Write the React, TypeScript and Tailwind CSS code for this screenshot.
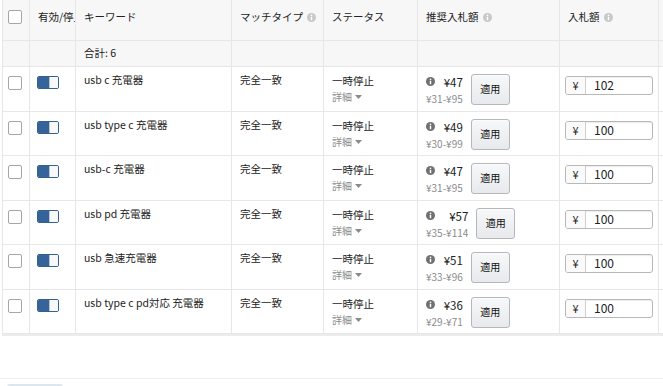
import { ReactNode } from "react"

type Row = {
  keyword: string
  bid: string
  price: string
  range: string
}

const rows: Row[] = [
  { keyword: "usb c 充電器", bid: "102", price: "¥47", range: "¥31-¥95" },
  { keyword: "usb type c 充電器", bid: "100", price: "¥49", range: "¥30-¥99" },
  { keyword: "usb-c 充電器", bid: "100", price: "¥47", range: "¥31-¥95" },
  { keyword: "usb pd 充電器", bid: "100", price: "¥57", range: "¥35-¥114" },
  { keyword: "usb 急速充電器", bid: "100", price: "¥51", range: "¥33-¥96" },
  { keyword: "usb type c pd対応 充電器", bid: "100", price: "¥36", range: "¥29-¥71" },
]

const rowHeights = ["h-[45px]", "h-[44px]", "h-[45px]", "h-[44px]", "h-[45px]", "h-[44px]"]

function InfoIcon({ dark }: { dark?: boolean }) {
  return (
    <svg width="9" height="9" viewBox="0 0 10 10" className="inline-block shrink-0">
      <circle cx="5" cy="5" r="5" fill={dark ? "#707070" : "#c8c8c8"} />
      <rect x="4.2" y="4.2" width="1.6" height="3.8" fill="#fff" />
      <circle cx="5" cy="2.7" r="0.9" fill="#fff" />
    </svg>
  )
}

function Checkbox() {
  return <div className="w-[14px] h-[14px] rounded-[2px] border border-[#a6a6a6] bg-white" />
}

function Toggle() {
  return (
    <div className="flex w-[22px] h-[13px] rounded-[2px] border border-[#35618f] overflow-hidden">
      <div className="w-[11px] h-full bg-[#36639a]" />
      <div className="flex-1 h-full bg-[#f6f8fa] border-l border-[#b9c4d0]" />
    </div>
  )
}

function Th({ children, className = "px-[8px] pt-[9px]" }: { children?: ReactNode; className?: string }) {
  return (
    <th className={"border-r border-[#e7e7e7] bg-[#f7f7f7] align-top text-left font-normal whitespace-nowrap overflow-hidden " + className}>
      {children}
    </th>
  )
}

function Td({ children, className = "px-[8px] pt-[6px]" }: { children?: ReactNode; className?: string }) {
  return <td className={"border-r border-[#e7e7e7] align-top " + className}>{children}</td>
}

export default function App() {
  return (
    <div
      className="w-[663px] h-[386px] overflow-hidden bg-white text-[10.5px] leading-[16px] text-[#222]"
      style={{ fontFamily: '"Noto Sans CJK JP", "Noto Sans", sans-serif' }}
    >
      <div className="pl-[2px]">
        <table className="table-fixed border-collapse w-[757px] border-l border-[#e7e7e7] shadow-[0_2px_0_#ececec]">
          <colgroup>
            <col className="w-[27px]" />
            <col className="w-[46px]" />
            <col className="w-[156px]" />
            <col className="w-[92px]" />
            <col className="w-[94px]" />
            <col className="w-[142px]" />
            <col className="w-[99px]" />
            <col className="w-[101px]" />
          </colgroup>
          <thead>
            <tr className="h-[40px] border-b border-[#e7e7e7]">
              <Th className="pl-[5px] pt-[10px]">
                <Checkbox />
              </Th>
              <Th className="pl-[8px] pt-[9px]">有効/停止</Th>
              <Th>キーワード</Th>
              <Th>
                <span className="inline-flex items-center gap-[4px]">
                  マッチタイプ <InfoIcon />
                </span>
              </Th>
              <Th>ステータス</Th>
              <Th>
                <span className="inline-flex items-center gap-[4px]">
                  推奨入札額 <InfoIcon />
                </span>
              </Th>
              <Th>
                <span className="inline-flex items-center gap-[4px]">
                  入札額 <InfoIcon />
                </span>
              </Th>
              <Th />
            </tr>
          </thead>
          <tbody>
            <tr className="h-[26px] border-b border-[#e7e7e7] bg-[#f7f7f7]">
              <td className="border-r border-[#e7e7e7]" />
              <td className="border-r border-[#e7e7e7]" />
              <td className="border-r border-[#e7e7e7] px-[8px] align-middle">合計: 6</td>
              <td className="border-r border-[#e7e7e7]" />
              <td className="border-r border-[#e7e7e7]" />
              <td className="border-r border-[#e7e7e7]" />
              <td className="border-r border-[#e7e7e7]" />
              <td className="border-r border-[#e7e7e7]" />
            </tr>
            {rows.map((r, i) => (
              <tr key={r.keyword} className={rowHeights[i] + " border-b border-[#e7e7e7]"}>
                <Td className="pl-[5px] pt-[9px]">
                  <Checkbox />
                </Td>
                <Td className="pl-[7px] pt-[9px]">
                  <Toggle />
                </Td>
                <Td className="px-[8px] pt-[5px]">{r.keyword}</Td>
                <Td className="px-[8px] pt-[5px]">完全一致</Td>
                <Td className="px-[8px] pt-[6px]">
                  <div>一時停止</div>
                  <div className="text-[10px] text-[#8a8a8a] flex items-center gap-[3px]">
                    詳細
                    <svg width="7" height="4" viewBox="0 0 7 4">
                      <path d="M0 0h7L3.5 4z" fill="#8a8a8a" />
                    </svg>
                  </div>
                </Td>
                <Td className="px-[8px] pt-[7px]">
                  <div className="flex items-start gap-[8px]">
                    <div className="flex flex-col">
                      <div className="flex items-center justify-between gap-[8px] leading-[16px]">
                        <InfoIcon dark />
                        <span className="text-[11.5px]">{r.price}</span>
                      </div>
                      <div className="text-[10px] text-[#8a8a8a] mt-[1px] whitespace-nowrap">{r.range}</div>
                    </div>
                    <button className="w-[39px] h-[31px] rounded-[3px] border border-[#b4b7bc] bg-gradient-to-b from-[#f7f8fa] to-[#e7e9ec] text-[10px] text-[#111] shadow-[0_1px_0_rgba(255,255,255,0.6)_inset]">
                      適用
                    </button>
                  </div>
                </Td>
                <Td className="pl-[5px] pt-[9px]">
                  <div className="flex h-[19px] w-[88px] rounded-[3px] border border-[#b8b8b8] overflow-hidden shadow-[0_1px_1px_rgba(0,0,0,0.08)_inset]">
                    <div className="w-[20px] flex items-center justify-center border-r border-[#cfcfcf] bg-[#fafafa] text-[11px]">¥</div>
                    <div className="flex items-center pl-[8px] text-[12px]">{r.bid}</div>
                  </div>
                </Td>
                <Td />
              </tr>
            ))}
          </tbody>
        </table>
      </div>
      <div className="mt-[44px] border-t border-[#ededed] pt-[5px] pl-[7px]">
        <div className="w-[56px] h-[20px] rounded-t-[3px] bg-[#dde6ec]" />
      </div>
    </div>
  )
}
